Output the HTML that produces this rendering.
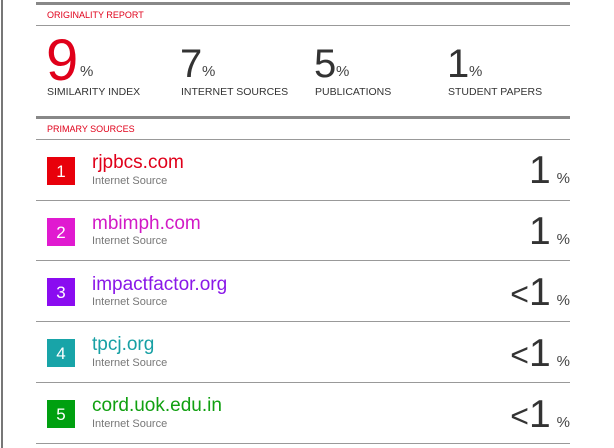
<!DOCTYPE html>
<html><head><style>
body{margin:0;width:614px;height:448px;background:#fff;position:relative;overflow:hidden;font-family:"Liberation Sans",sans-serif;}
.a{position:absolute;white-space:nowrap}
.vl{position:absolute;left:1px;top:0;width:2px;height:448px;background:#777}
.hl{position:absolute;left:36px;width:534px;background:#999}
.red{color:#e0001a}
.lab{font-size:10.5px;color:#333}
.big{color:#333;font-size:40px;line-height:1}
.pc{font-size:15px;color:#444}
.bd{position:absolute;left:47px;width:28px;height:28px;color:#fff;font-size:17px;text-align:center;line-height:29px}
.dom{position:absolute;left:92px;font-size:19px;line-height:1}
.src{position:absolute;left:92px;font-size:11px;color:#777}
.rp{position:absolute;right:44px;text-align:right;color:#333;line-height:1}
.rp b{font-weight:normal;font-size:39px}
.rp span{font-size:15px;color:#444;margin-left:6px}
.rp i{font-style:normal;font-size:32px}
</style></head><body>
<div class="vl"></div>
<div class="hl" style="top:2px;height:3px;background:#888"></div>
<div class="hl" style="top:25px;height:1px"></div>
<div class="hl" style="top:116px;height:3px;background:#888"></div>
<div class="hl" style="top:139px;height:1px"></div>
<div class="hl" style="top:200px;height:1px"></div>
<div class="hl" style="top:260px;height:1px"></div>
<div class="hl" style="top:321px;height:1px"></div>
<div class="hl" style="top:382px;height:1px"></div>
<div class="hl" style="top:443px;height:1px"></div>

<div class="a red" style="left:47px;top:10px;font-size:9px">ORIGINALITY REPORT</div>
<div class="a red" style="left:46px;top:32px;font-size:58px;line-height:1">9</div>
<div class="a pc" style="left:80px;top:63px">%</div>
<div class="a lab" style="left:47px;top:86px">SIMILARITY INDEX</div>
<div class="a big" style="left:180px;top:44px">7</div>
<div class="a pc" style="left:202px;top:63px">%</div>
<div class="a lab" style="left:181px;top:86px">INTERNET SOURCES</div>
<div class="a big" style="left:314px;top:44px">5</div>
<div class="a pc" style="left:336px;top:63px">%</div>
<div class="a lab" style="left:315px;top:86px">PUBLICATIONS</div>
<div class="a big" style="left:447px;top:44px">1</div>
<div class="a pc" style="left:469px;top:63px">%</div>
<div class="a lab" style="left:448px;top:86px">STUDENT PAPERS</div>
<div class="a red" style="left:47px;top:124px;font-size:9px">PRIMARY SOURCES</div>

<div class="bd" style="top:157px;background:#e8000b">1</div>
<div class="dom" style="top:153px;color:#e0001a">rjpbcs.com</div>
<div class="src" style="top:175px">Internet Source</div>
<div class="rp" style="top:151px"><b>1</b><span>%</span></div>

<div class="bd" style="top:218px;background:#e01ad0">2</div>
<div class="dom" style="top:214px;color:#d21ac6">mbimph.com</div>
<div class="src" style="top:235px">Internet Source</div>
<div class="rp" style="top:212px"><b>1</b><span>%</span></div>

<div class="bd" style="top:278px;background:#8a0cf0">3</div>
<div class="dom" style="top:275px;color:#8a18e8">impactfactor.org</div>
<div class="src" style="top:296px">Internet Source</div>
<div class="rp" style="top:273px"><i>&lt;</i><b>1</b><span>%</span></div>

<div class="bd" style="top:339px;background:#18a4a8">4</div>
<div class="dom" style="top:335px;color:#17a0a4">tpcj.org</div>
<div class="src" style="top:357px">Internet Source</div>
<div class="rp" style="top:334px"><i>&lt;</i><b>1</b><span>%</span></div>

<div class="bd" style="top:400px;background:#00a010">5</div>
<div class="dom" style="top:396px;color:#10a010">cord.uok.edu.in</div>
<div class="src" style="top:418px">Internet Source</div>
<div class="rp" style="top:395px"><i>&lt;</i><b>1</b><span>%</span></div>
</body></html>
